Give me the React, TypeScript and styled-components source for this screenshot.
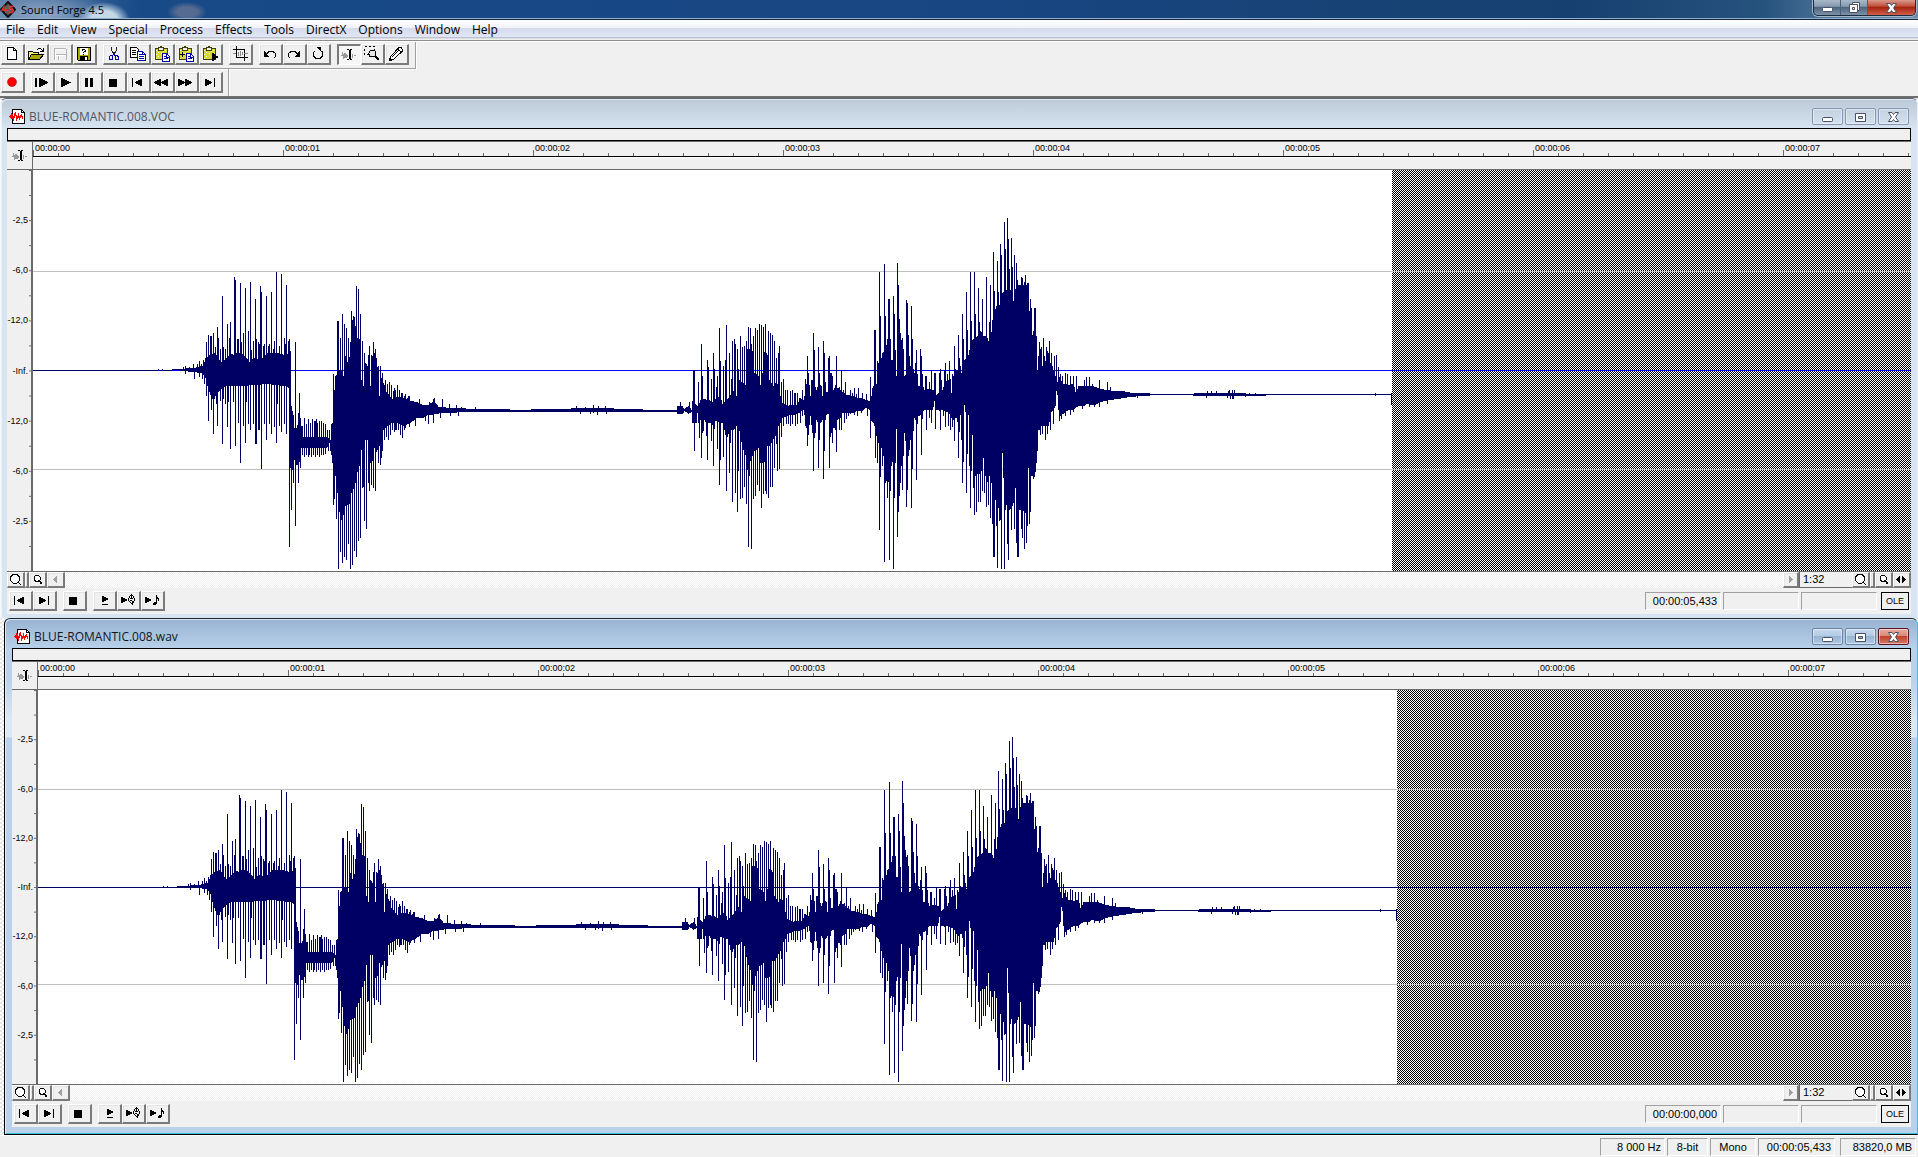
import React from "react";
import styled, { createGlobalStyle, css } from "styled-components";

const UI = '"Open Sans", "Noto Sans", sans-serif';
const SMALL = '"Liberation Sans", Arial, sans-serif';
const FACE = "#f0f0f0";

const GlobalStyle = createGlobalStyle`
  * { box-sizing: border-box; }
  body { margin: 0; background: ${FACE}; }
  button { font: inherit; color: inherit; padding: 0; margin: 0; }
`;

/* ---------- waveform data: three units per screen pixel ---------- */

type Cluster = { at: number; body: string; up: string; down: string };

const CLUSTERS: Cluster[] = [
  {
    at: 0,
    body: "0,480,482 300,480,482 372,480,482 378,480,482 414,480,482 441,479,483",
    up: "375,477 387,477 429,477",
    down: "",
  },
  {
    at: 147,
    body: "0,478,483 25,476,486 45,474,488 66,468,492 74,458,500 78,452,520 84,435,540 95,435,570 105,430,560 120,458,540 135,450,530 150,432,530 160,436,530 166,430,530 180,430,528 200,445,530 205,458,525 220,445,525 230,450,525 245,445,525 260,430,523 275,432,525 290,430,525 300,432,530 320,440,530 327,400,540 331,425,775 334,590,780 340,630,780 344,655,750 350,655,765 356,610,765 362,645,716 370,682,715 400,682,715 440,682,715 450,690,695 457,640,740 460,640,780 467,500,800 475,480,900 485,485,930 490,500,915 495,440,890 504,465,885 510,420,880 515,330,850 525,350,820 530,385,790 540,390,760 545,510,720 550,530,700 556,460,690 563,470,690 570,530,760 578,440,755 584,430,715 590,445,720 594,560,720 600,560,700 605,505,740 610,520,660 620,548,650 635,570,640 650,562,640 670,565,650 690,575,640 710,577,625 730,587,625 745,585,615 760,575,615 775,592,612 800,594,609 830,594,609 860,597,608 890,597,608 930,599,606 989,600,606",
    up: "10,471 16,468 28,471 40,462 52,462 58,453 64,462 70,450 76,444 79,396 85,375 92,378 95,378 100,369 106,411 112,351 115,384 121,417 127,258 130,411 136,417 142,342 149,384 151,336 163,201 166,210 172,387 175,387 181,219 184,396 190,369 196,234 205,363 211,216 214,420 220,393 226,267 229,387 235,396 238,402 241,228 244,246 250,408 253,402 259,258 265,408 268,402 274,246 280,417 283,393 289,186 298,408 304,192 313,384 316,402 319,225 325,393 328,387 346,396 340,615 355,609 358,549 361,624 367,648 373,624 379,642 385,627 391,639 397,627 403,633 406,633 409,627 412,639 418,633 424,633 430,639 436,642 442,660 448,660 454,642 460,492 463,540 469,501 472,333 475,333 481,384 487,312 493,342 499,354 505,384 511,396 514,303 517,333 520,318 523,321 526,351 529,228 532,387 535,237 541,312 547,393 553,429 559,462 565,435 568,408 574,435 577,444 580,396 583,453 586,417 589,444 595,468 601,468 607,489 613,530 616,510 622,522 628,516 634,525 640,543 643,534 646,540 652,525 658,540 664,549 667,549 673,558 676,552 682,564 685,558 688,558 718,567 748,576 760,567 763,564 787,567 808,582 829,585 844,591 886,591",
    down: "16,492 43,507 58,501 67,507 73,522 79,558 85,633 94,600 100,672 103,567 109,582 112,648 121,573 127,702 130,567 136,582 142,651 145,576 151,717 160,576 166,708 175,639 181,759 190,648 196,699 199,576 205,642 211,660 220,642 226,702 229,702 235,660 238,660 244,777 253,642 259,690 268,642 274,672 283,651 289,699 292,582 298,648 304,666 313,642 319,672 328,1011 334,900 340,819 346,948 349,765 355,819 361,774 367,735 373,741 379,735 385,741 388,735 394,741 400,735 406,741 412,735 418,741 424,735 430,735 436,732 445,723 451,723 454,735 457,759 460,885 463,867 469,927 475,1077 481,1026 487,1059 493,1041 499,1050 505,1002 511,1077 517,1065 523,1023 529,1041 535,993 541,984 547,834 550,831 553,933 559,957 565,819 568,843 574,825 580,834 586,843 589,726 595,759 601,765 604,744 607,693 613,690 619,681 625,690 631,675 637,660 643,666 646,660 649,660 655,660 661,675 667,684 673,660 676,654 688,651 706,648 736,633 745,642 760,639 781,624 811,618 835,618",
  },
  {
    at: 477,
    body: "0,600,606 60,600,606 100,599,606 180,597,607 250,594,609 290,595,608 330,599,606 400,600,606 449,600,606",
    up: "200,588 226,591 250,585 265,588 286,588 310,594",
    down: "210,612 240,612 262,615 290,612",
  },
  {
    at: 627,
    body: "0,600,606 48,600,606 52,588,614 66,590,614 72,598,605 85,588,612 95,600,606 98,575,640 108,585,640 112,590,610 122,572,630 128,568,670 134,568,630 140,570,680 146,572,640 155,575,640 160,580,670 166,568,635 178,560,640 188,582,640 198,572,690 208,560,660 220,545,660 230,558,650 236,510,660 246,520,715 256,525,735 262,417,780 275,417,740 284,490,725 295,500,715 300,525,760 306,490,760 312,427,758 322,435,710 328,510,708 338,530,690 345,520,680 354,525,650 360,558,640 366,580,625 385,588,618 400,585,616 412,585,612 418,565,610 430,570,600 436,535,650 444,490,675 450,560,620 456,512,670 464,530,680 470,540,630 478,490,690 482,525,640 488,560,630 492,540,650 498,548,615 504,548,612 509,490,680 516,500,665 520,540,655 527,540,660 532,535,630 540,540,625 546,548,610 560,555,610 572,558,612 590,565,605 605,565,605 615,570,595 628,575,600 633,560,633 640,530,640 648,522,680 655,460,700 662,450,715 668,430,725 675,410,820 682,400,810 690,390,840 695,452,770 700,450,700 705,420,760 709,500,658 714,300,900 720,370,820 724,390,770 730,420,740 734,500,670 740,480,820 745,440,740 750,470,690 757,470,690 762,490,625 770,485,640 776,530,620 784,520,615 792,540,600 805,538,600 818,540,600 822,550,575 830,556,600 838,545,605 846,540,600 855,515,605 865,510,610 873,550,625 880,500,630 888,480,625 896,480,660 903,490,585 909,460,700 914,450,585 920,440,716 925,435,615 930,400,760 938,390,675 945,385,800 955,375,790 960,365,800 970,378,745 978,378,830 985,395,800 992,375,800 998,330,930 1003,300,870 1010,290,870 1020,285,930 1027,250,730 1032,245,915 1038,240,885 1048,240,900 1055,240,890 1060,275,880 1066,237,835 1071,225,990 1078,225,900 1085,225,900 1095,225,910 1102,230,950 1105,235,775 1109,305,930 1114,300,800 1118,375,800 1124,320,795 1128,380,760 1131,480,660 1137,400,660 1145,478,650 1150,430,650 1156,455,650 1165,430,650 1172,460,610 1180,480,600 1186,500,590 1190,520,545 1195,500,600 1200,505,600",
    up: "61,576 88,576 100,480 103,480 115,516 124,402 127,498 142,450 145,471 154,507 160,429 163,477 169,531 172,498 178,354 181,453 190,468 196,450 199,345 208,429 214,507 217,393 223,387 226,402 232,417 235,477 241,378 247,411 253,408 259,393 265,351 271,354 274,402 280,378 286,354 292,360 298,342 304,345 310,351 316,342 325,363 331,369 337,375 343,393 349,444 355,429 358,408 364,516 370,507 376,540 382,540 391,543 397,540 403,549 406,549 412,549 427,540 436,507 442,438 445,492 454,510 460,369 463,420 475,411 478,492 490,393 493,429 496,516 505,444 508,438 514,489 523,534 526,525 529,438 535,540 538,531 544,480 550,540 556,516 571,540 577,549 583,534 589,552 595,534 607,549 619,552 631,501 637,534 643,360 646,360 652,453 658,186 661,318 667,429 670,426 673,162 676,318 682,387 685,267 688,267 691,387 700,258 703,312 706,420 712,159 715,225 718,327 721,375 727,384 730,417 739,270 742,279 745,375 748,438 754,288 757,387 766,459 769,420 781,417 784,438 787,492 796,498 799,498 808,516 814,480 823,489 826,489 838,489 841,477 844,510 853,483 856,459 862,492 868,453 871,507 877,492 883,408 886,477 895,375 898,444 901,468 907,312 910,387 919,246 922,360 931,186 934,333 943,186 946,312 955,234 958,336 967,267 979,201 988,336 991,225 1000,126 1003,243 1012,153 1015,246 1021,102 1024,135 1033,36 1036,117 1042,24 1045,87 1048,177 1054,84 1057,171 1063,135 1069,159 1072,210 1084,201 1087,204 1093,216 1096,195 1102,219 1105,219 1111,267 1114,294 1123,294 1126,294 1129,393 1138,396 1141,417 1144,411 1150,384 1153,438 1159,411 1162,423 1165,429 1168,393 1174,429 1183,438 1189,435 1195,471",
    down: "103,723 115,639 118,684 124,744 142,750 154,693 160,768 172,717 178,825 181,750 190,741 199,843 208,789 211,699 217,876 226,849 232,906 235,783 241,867 247,864 253,831 259,882 265,1011 268,798 274,1017 280,867 286,858 292,825 298,843 304,894 310,852 316,843 319,852 325,864 331,831 337,831 343,774 349,702 352,783 358,777 364,681 370,648 379,642 385,642 391,648 397,642 406,648 412,642 421,639 427,618 442,708 460,783 463,684 475,774 478,690 490,807 493,723 508,774 511,681 517,699 529,726 538,660 544,660 553,639 559,627 565,618 583,615 592,618 604,609 622,618 631,684 646,744 652,759 658,960 661,801 667,768 673,1056 676,819 682,864 688,1050 691,843 700,1077 703,864 712,981 715,906 718,819 727,840 739,891 742,840 754,894 757,777 769,810 772,642 784,735 787,627 799,660 808,624 814,639 826,657 841,660 850,618 856,651 865,648 871,660 877,651 883,693 895,744 898,666 904,690 907,819 910,756 919,849 922,732 928,768 931,894 934,783 940,834 943,915 949,906 955,876 961,876 967,843 973,849 979,891 985,885 991,924 997,942 1000,1041 1003,1041 1009,948 1012,1074 1018,933 1024,1077 1033,1077 1042,1002 1045,1050 1054,960 1063,957 1069,999 1072,1041 1075,1041 1084,957 1087,984 1093,1017 1099,999 1108,942 1111,906 1120,807 1123,801 1126,783 1132,723 1141,675 1147,672 1156,690 1162,672 1171,660 1180,642 1198,633",
  },
  {
    at: 827,
    body: "600,510,618 610,522,612 625,526,600 640,524,600 646,548,595 655,530,590 670,528,590 680,530,582 690,528,587 705,532,587 715,536,580 735,541,574 760,544,570 790,545,566 810,549,562 840,551,560 870,552,558 969,552,558",
    up: "601,492 607,498 616,489 622,492 631,498 640,498 649,498 673,510 679,501 688,501 697,522 718,510 742,516 751,531",
    down: "598,633 604,627 610,612 616,618 631,615 640,606 667,597 688,591 703,591 718,591 742,582 832,564",
  },
  {
    at: 1117,
    body: "0,552,557 130,552,558 145,549,558 284,549,558 290,552,558 345,552,558 350,552,554 727,552,554",
    up: "172,543 184,543 199,543 235,543 238,540 247,540 253,540 298,549 316,549 675,549 724,549",
    down: "169,564 232,564 241,567 247,567 250,567 286,561 675,558 724,585",
  },
];

const WAVE_W = 1359;
const WAVE_H = 401;

const nums = (s: string) => (s ? s.split(" ").map((p) => p.split(",").map(Number)) : []);

function buildWave(): string {
  const top = new Map<number, number>();
  const bottom = new Map<number, number>();
  CLUSTERS.forEach(({ at, body, up, down }) => {
    const pts = nums(body);
    for (let i = 0; i < pts.length - 1; i++) {
      const [x0, t0, b0] = pts[i];
      const [x1, t1, b1] = pts[i + 1];
      for (let x = Math.floor(x0 / 3); x <= Math.floor(x1 / 3); x++) {
        const k = Math.min(1, Math.max(0, (x * 3 - x0) / (x1 - x0)));
        top.set(at + x, Math.floor((t0 + (t1 - t0) * k) / 3));
        bottom.set(at + x, Math.floor((b0 + (b1 - b0) * k) / 3));
      }
    }
    nums(up).forEach(([x, y]) => {
      const c = at + Math.floor(x / 3);
      top.set(c, Math.min(top.get(c) ?? 999, Math.floor(y / 3)));
    });
    nums(down).forEach(([x, y]) => {
      const c = at + Math.floor(x / 3);
      bottom.set(c, Math.max(bottom.get(c) ?? 0, Math.floor(y / 3)));
    });
  });
  let d = "";
  top.forEach((t, x) => {
    if (x >= WAVE_W) return;
    const b = bottom.get(x) ?? t;
    d += `M${x} ${t + 40}h1V${Math.max(b, t + 1) + 40}h-1z`;
  });
  return d;
}

const WAVE_PATH = buildWave();

/* ---------- shell ---------- */

const Shell = styled.div`
  display: flex;
  flex-direction: column;
  min-height: 100vh;
  background: ${FACE};
  font-family: ${UI};
  font-size: 12px;
  color: #000;
  overflow: hidden;
`;

const AppTitle = styled.header`
  display: flex;
  justify-content: space-between;
  height: 20px;
  border-bottom: 1px solid #16243c;
  box-shadow: inset 0 -1px #8fb0d0;
  background:
    radial-gradient(ellipse 26px 18px at 104px 20px, #c4d8e8 0 50%, transparent 100%),
    radial-gradient(ellipse 70px 24px at 44px 14px, #90a9c6 0, transparent 100%),
    radial-gradient(ellipse 20px 10px at 187px 12px, #566b92 0 50%, transparent 100%),
    linear-gradient(90deg, #5a7ca6 0, #184a88 140px, #184682 50%, #16406f 82%, #26527e 92%, #54799c 96%, #6d8ba8 100%);
`;

const AppName = styled.h1`
  display: flex;
  align-items: center;
  gap: 5px;
  margin: 0;
  height: 18px;
  font-size: 11px;
  font-weight: 400;
`;

const AppCaption = styled.div`
  display: flex;
  height: 16px;
  margin-right: 2px;
  border: 1px solid #1b2c40;
  border-top: 0;
  border-radius: 0 0 5px 5px;
  overflow: hidden;
  box-shadow: 0 0 0 1px #a4b6c8;
`;

const AppCaptionButton = styled.button<{ $close?: boolean }>`
  display: grid;
  place-items: center;
  width: ${(p) => (p.$close ? 47 : 27)}px;
  border: 0;
  border-right: 1px solid #4b5f77;
  background: ${(p) =>
    p.$close
      ? "linear-gradient(#d99a8c 0, #c2513c 40%, #a82410 50%, #d0604a 100%)"
      : "linear-gradient(#a9b9c9 0, #8599ae 42%, #4d6680 50%, #7b93aa 100%)"};
  &:last-child { border-right: 0; }
`;

const MenuBar = styled.nav`
  display: flex;
  height: 21px;
  background: linear-gradient(#fff 0, #f0f3fa 38%, #d5dbed 42%, #e1e6f6 84%, #b6bccc 88%, #f0f0f0 95%);
  border-bottom: 1px solid #8c8c8c;
`;

const MenuItem = styled.button`
  border: 0;
  background: transparent;
  padding: 0 6px;
  line-height: 20px;
`;

const Toolbars = styled.div`
  display: flex;
  flex-direction: column;
  align-items: flex-start;
  border-top: 1px solid #fff;
  border-bottom: 2px solid #6e6e6e;
`;

const Toolbar = styled.div`
  display: flex;
  gap: 6px;
  padding: 2px 6px 3px 1px;
  border-right: 1px solid #a0a0a0;
  border-bottom: 1px solid #a0a0a0;
  box-shadow: 1px 1px #fff;
  & + & {
    padding: 3px 5px 3px 1px;
    border-bottom: 0;
    box-shadow: 1px 0 #fff;
  }
`;

const Group = styled.div`
  display: flex;
`;

const raised = css`
  border-style: solid;
  border-width: 1px 2px 2px 1px;
  border-color: #fff #7a7a7a #7a7a7a #fff;
  box-shadow: inset 1px 1px #e3e3e3;
  background: ${FACE};
`;

const ToolButton = styled.button<{ $pressed?: boolean; $short?: boolean }>`
  ${raised}
  display: grid;
  place-items: start;
  align-content: start;
  justify-content: start;
  padding: ${(p) => (p.$short ? 0 : 1)}px 0 0 2px;
  width: 24px;
  height: ${(p) => (p.$short ? 20 : 21)}px;
  ${(p) =>
    p.$pressed &&
    css`
      border-width: 2px 1px 1px 2px;
      border-color: #7a7a7a #fff #fff #7a7a7a;
      background: #f6f6f6;
      box-shadow: none;
    `}
  svg { display: block; }
`;

/* ---------- document windows ---------- */

const Workspace = styled.main`
  display: flex;
  flex: 1;
  flex-direction: column;
  background: repeating-conic-gradient(#fff 0 25%, #e4e6ea 0 50%) 0 0 / 4px 4px;
`;

const Doc = styled.section<{ $active?: boolean }>`
  display: flex;
  flex: 1 0 auto;
  flex-direction: column;
  margin-left: ${(p) => (p.$active ? 4 : 0)}px;
  padding: ${(p) => (p.$active ? "0 6px 7px 7px" : "0 6px 4px")};
  border: 1px solid ${(p) => (p.$active ? "#1c2733" : "#5e6873")};
  border-left-color: ${(p) => (p.$active ? "#000" : "#f4f8fc")};
  border-right-color: ${(p) => (p.$active ? "#36c3dc" : "#e8eef6")};
  border-bottom: ${(p) => (p.$active ? "1px solid #000" : "0")};
  border-radius: 6px 6px 0 0;
  background: ${(p) =>
    p.$active
      ? "linear-gradient(#98b4d2 0, #b9d1ea 30px, #b9d1ea 60px, #dbe8f5 100px, #dbe8f5 118px, #b9d1ea 119px)"
      : "linear-gradient(#bccad8 0, #d7e4f2 30px)"};
  box-shadow: inset 1px 1px rgba(255, 255, 255, 0.6)${(p) => (p.$active ? ", inset 0 -1px #36c3dc" : "")};
`;

const DocTitle = styled.header`
  display: flex;
  align-items: center;
  height: 29px;
  gap: 4px;
  padding: 7px 2px 1px;
`;

const DocName = styled.h2<{ $active?: boolean }>`
  flex: 1;
  margin: 0;
  font-size: 12px;
  line-height: 17px;
  font-weight: 400;
  color: ${(p) => (p.$active ? "#10161e" : "#50565e")};
`;

const DocButtons = styled.div`
  display: flex;
  gap: 2px;
`;

const DocButton = styled.button<{ $active?: boolean; $close?: boolean }>`
  display: grid;
  place-items: center;
  width: 31px;
  height: 17px;
  border: 1px solid ${(p) => (p.$active ? (p.$close ? "#5c1420" : "#6b83a3") : "#8495b2")};
  border-radius: 2px;
  box-shadow: inset 0 0 0 1px rgba(255, 255, 255, 0.45);
  background: ${(p) =>
    p.$active
      ? p.$close
        ? "linear-gradient(#e5aba0 0, #d98a7a 45%, #bf4429 50%, #d27b68 100%)"
        : "linear-gradient(#c5d8ec 0, #b3cbe4 45%, #98b5d5 50%, #b0cae4 100%)"
      : "transparent"};
`;

const DocBody = styled.div`
  display: flex;
  flex: 1;
  flex-direction: column;
  background: ${FACE};
`;

const Overview = styled.div`
  height: 13px;
  border: 1px solid #000;
`;

const RulerRow = styled.div`
  display: flex;
  height: 29px;
  border-top: 1px solid #6a6a6a;
  border-bottom: 1px solid #6a6a6a;
`;

const RulerTool = styled.button`
  display: grid;
  place-items: center;
  width: 26px;
  padding: 1px 0 0 1px;
  border: 0;
  border-right: 1px solid #6a6a6a;
  background: transparent;
`;

const Ruler = styled.div`
  display: flex;
  flex: 1;
  height: 15px;
  overflow: hidden;
  border-bottom: 1px solid #000;
  background: repeating-linear-gradient(90deg, #6a6a6a 0 1px, transparent 1px 25px) 0 100% / 100% 3px no-repeat;
  box-shadow: 0 1px #fff;
`;

const Second = styled.span`
  flex: 0 0 250px;
  padding-left: 2px;
  font: 9px/13px ${SMALL};
  background: linear-gradient(#6a6a6a, #6a6a6a) 0 100% / 1px 6px no-repeat;
`;

const PlotRow = styled.div<{ $min: number }>`
  display: flex;
  flex: 1;
  min-height: ${(p) => p.$min}px;
`;

const Scale = styled.ol`
  display: grid;
  grid-template-columns: 100%;
  grid-template-rows: 1fr repeat(7, 2fr) 1fr;
  width: 26px;
  margin: 0;
  padding: 0 4px 0 0;
  list-style: none;
  border-right: 1px solid #6a6a6a;
  background: linear-gradient(#6a6a6a, #6a6a6a) 100% 0 / 1px 1px repeat-y,
    linear-gradient(#6a6a6a 0 1px, transparent 1px) 100% 0 / 3px 6.25% repeat-y;
  font: 9px/12px ${SMALL};
`;

const Level = styled.li<{ $row: number }>`
  grid-row: ${(p) => p.$row};
  align-self: center;
  justify-self: end;
`;

const Plot = styled.div`
  position: relative;
  display: flex;
  flex: 1;
  min-width: 0;
  overflow: hidden;
`;

const Signal = styled.div`
  flex: 0 0 ${WAVE_W}px;
  background: #fff;
`;

const Past = styled.div`
  flex: 1;
  background: repeating-conic-gradient(#000 0 25%, #fff 0 50%) 0 0 / 2px 2px;
`;

const Guide = styled.i<{ $at: string; $color: string }>`
  position: absolute;
  left: 0;
  right: 0;
  top: ${(p) => p.$at};
  height: 1px;
  background: ${(p) => p.$color};
`;

const Wave = styled.svg`
  position: absolute;
  inset: 0 auto 0 0;
  display: block;
  width: ${WAVE_W}px;
  height: 100%;
`;

const ScrollRow = styled.div`
  display: flex;
  height: 17px;
  border-top: 1px solid #6a6a6a;
`;

const ScrollButton = styled.button<{ $w: number }>`
  ${raised}
  display: grid;
  place-items: center;
  width: ${(p) => p.$w}px;
`;

const ScrollTrack = styled.div`
  flex: 1;
  background: repeating-conic-gradient(#fff 0 25%, #f0f0f0 0 50%) 0 0 / 2px 2px;
`;

const Ratio = styled.output`
  width: 53px;
  padding-left: 3px;
  border-left: 1px solid #6a6a6a;
  border-bottom: 1px solid #6a6a6a;
  font: 11px/15px ${SMALL};
`;

const Transport = styled.footer`
  display: flex;
  justify-content: space-between;
  padding: 3px 2px;
`;

const ToolGroups = styled.div`
  display: flex;
  gap: 6px;
`;

const Fields = styled.div`
  display: flex;
  gap: 2px;
  align-items: center;
`;

const Field = styled.output<{ $w: number; $gap?: number; $center?: boolean }>`
  width: ${(p) => p.$w}px;
  height: 18px;
  margin-left: ${(p) => p.$gap ?? 0}px;
  padding-right: ${(p) => (p.$center ? 0 : 3)}px;
  border: 1px solid #fff;
  border-top-color: #a0a0a0;
  border-left-color: #a0a0a0;
  font: 11px/16px ${SMALL};
  text-align: ${(p) => (p.$center ? "center" : "right")};
  white-space: nowrap;
`;

const OleButton = styled.button`
  width: 28px;
  height: 18px;
  margin-left: 2px;
  border: 1px solid #000;
  background: ${FACE};
  font: 9px/14px ${SMALL};
`;

const StatusBar = styled.footer`
  display: flex;
  justify-content: flex-end;
  gap: 2px;
  height: 22px;
  padding: 2px 2px 2px 0;
  border-top: 1px solid #fff;
`;

/* ---------- icons ---------- */

const Svg = ({ w = 16, h = 16, children }: { w?: number; h?: number; children: React.ReactNode }) => (
  <svg width={w} height={h} viewBox={`0 0 ${w} ${h}`} shapeRendering="crispEdges" fill="none" stroke="none" aria-hidden="true">
    {children}
  </svg>
);

const clip = (
  <>
    <path d="M1 2.500h12v11H1z" fill="#d8d838" stroke="#404000" />
    <path d="M2 4h1v1H2zM4 6h1v1H4zM2 8h1v1H2zM4 10h1v1H4zM11 4h1v1h-1zM7 7h1v1H7zM2 12h1v1H2zM9 5h1v1H9z" fill="#fff" />
    <path d="M4.500 1.500h5v3h-5z" fill="#f0f0f0" stroke="#404000" />
    <path d="M6 0h2v2H6z" fill="#404000" />
  </>
);
const sheet = (
  <>
    <path d="M8.500 7.500h4l3 3v5h-7z" fill="#fff" stroke="#0000a8" />
    <path d="M10 10h2v1h-2zM10 12h4v1h-4zM12 8h1v3h2v1h-3z" fill="#0000a8" />
  </>
);

const icons: Record<string, React.ReactNode> = {
  new: <Svg><path d="M3.500 1.500h6l3 3v9h-9z" fill="#fff" stroke="#000" /><path d="M9.500 1.500v3h3" stroke="#000" /></Svg>,
  open: (
    <Svg>
      <path d="M.5 13.500V5.500h4l1 1h5v3" fill="#f4f460" stroke="#000" />
      <path d="M.5 13.500l3-5h12l-4 5z" fill="#a8a800" stroke="#000" />
      <path d="M9 3h1V2h3v1h1v1h1V2h1v4h-4V5h2V4h-1V3h-3v1H9z" fill="#000" />
    </Svg>
  ),
  save: <Svg><path d="M2.500 14V2.500H14M2.500 8.500H14M6.500 9v5M14.500 3v11" stroke="#b4b4b4" /><path d="M3.500 14V3.500H14M3.500 9.500H14M7.500 10v4" stroke="#fff" /></Svg>,
  saveAs: (
    <Svg>
      <path d="M1.500 1.500h13v13H3l-1.500-1z" fill="#a8a800" stroke="#000" />
      <path d="M4 2h8v7H4z" fill="#fff" /><path d="M4 10h8v4H4z" fill="#000" /><path d="M9 11h2v3H9z" fill="#fff" />
      <path d="M6 3h3v1H6zM9 4h1v2H9zM8 5h1v1H8zM7 6h1v1H7zM7 8h1v1H7zM6 4h1v1H6z" fill="#000" />
    </Svg>
  ),
  cut: (
    <Svg>
      <path d="M5.500 1v3l3 5M10.500 1v3l-3 5" stroke="#222" />
      <path d="M6.500 9.500h-2l-1 1v3h3v-4l1-1.500 1.500 1.500v4h3v-3l-1-1h-2" stroke="#0000b0" />
    </Svg>
  ),
  copy: (
    <Svg>
      <path d="M0.500 1.500h6l2 2v8h-8z" fill="#fff" stroke="#000" />
      <path d="M2 4.500h4M2 6.500h4M2 8.500h4" stroke="#000" />
      <path d="M7.500 5.500h5l3 3v6h-8z" fill="#fff" stroke="#0000b0" />
      <path d="M9 8.500h3M9 10.500h5M9 12.500h5M12.500 5v3.500H15" stroke="#0000b0" />
    </Svg>
  ),
  paste: <Svg>{clip}{sheet}</Svg>,
  pasteMix: <Svg>{clip}{sheet}<path d="M2 8.500h5M4.500 6v5" stroke="#000" /></Svg>,
  pastePlay: <Svg>{clip}<path d="M10 7h2v1h1v1h1v1h2v2h-2v1h-1v1h-1v1h-2z" fill="#000" /></Svg>,
  trim: <Svg><path d="M4.500 0v12M1 3.500h12M12.500 3v12M4 11.500h12" stroke="#000" /><path d="M1 7.500h3M6.500 6v4M8.500 5v5M10.500 6v3M12 7.500h4" stroke="#888" /></Svg>,
  undo: <Svg><path d="M4 8.500L7 5.500h4l2.500 2v3l-2 2" stroke="#000" /><path d="M2 5v6h5v-1H6V9H5V8H4V6H3V5z" fill="#000" /></Svg>,
  redo: <Svg><path d="M12 8.500L9 5.500H5l-2.500 2v3l2 2" stroke="#000" /><path d="M14 5v6H9v-1h1V9h1V8h1V6h1V5z" fill="#000" /></Svg>,
  repeat: <Svg><path d="M10 4.500L12.500 6v4L10 12.500H6L3.500 10V7l1-1.500" stroke="#000" /><path d="M7 1h4v4h-1V4H9V3H8V2H7z" fill="#000" /></Svg>,
  edit: (
    <Svg>
      <path d="M0 8.500h1.500v-3l1.500 6 1-5 1 4 1-3v2M11 7v4M12.500 8.500H15" stroke="#999" />
      <path d="M6 2h2v1h1V2h2v1H9.500v9H11v1H9v-1H8v1H6v-1h1.500V3H6z" fill="#000" />
    </Svg>
  ),
  magnify: (
    <Svg>
      <path d="M0.500 0.500h10v8h-10z" stroke="#000" strokeDasharray="2 2" />
      <circle cx="8.500" cy="7.500" r="3.500" fill="#e8e8e8" stroke="#000" /><path d="M11 10l4 4" stroke="#000" strokeWidth="2" />
    </Svg>
  ),
  pencil: <Svg><path d="M1.500 14.500l1-4 8.500-9h2l1.500 2v1.500l-9 8.500z" fill="#fff" stroke="#000" /><path d="M10 3l3 3M4 11l7-7" stroke="#000" /><path d="M1 13h2v2H1z" fill="#000" /></Svg>,
  record: <svg width="16" height="16" viewBox="0 0 16 16" aria-hidden="true"><circle cx="8" cy="8" r="4.500" fill="#f00" stroke="#700" strokeWidth="0.500" /></svg>,
  playAll: <Svg><path d="M1 4h2v9H1zM5 4h2v1h2v1h2v1h2v1h1v1h-1v1h-2v1H9v1H7v1H5z" fill="#000" /></Svg>,
  play: <Svg><path d="M3 4h2v1h2v1h2v1h2v1h2v1h-2v1H9v1H7v1H5v1H3z" fill="#000" /></Svg>,
  pause: <Svg><path d="M3 4h3v9H3zM8 4h3v9H8z" fill="#000" /></Svg>,
  stop: <Svg><path d="M3 5h8v8H3z" fill="#000" /></Svg>,
  first: <Svg><path d="M2 4h1v9H2zM12 5v7h-2v-1H8v-1H6V9H5V8h1V7h2V6h2V5z" fill="#000" /></Svg>,
  rewind: <Svg><path d="M7 5v7H5v-1H3v-1H1V9H0V8h1V7h2V6h2V5zM14 5v7h-2v-1h-2v-1H8V9H7V8h1V7h2V6h2V5z" fill="#000" /></Svg>,
  forward: <Svg><path d="M0 5v7h2v-1h2v-1h2V9h1V8H6V7H4V6H2V5zM7 5v7h2v-1h2v-1h2V9h1V8h-1V7h-2V6H9V5z" fill="#000" /></Svg>,
  last: <Svg><path d="M3 5v7h2v-1h2v-1h2V9h1V8H9V7H7V6H5V5zM12 4h1v9h-1z" fill="#000" /></Svg>,
  docPlay: <Svg><path d="M6 4h2v1h2v1h2v2h-2v1H8v1H6zM6 12h6v1H6z" fill="#000" /></Svg>,
  docLoop: (
    <Svg>
      <path d="M1 5h2v1h2v1h2v2H5v1H3v1H1z" fill="#000" />
      <path d="M10 3h3v1h-3zM9 4h1v2H9zM8 6h1v3H8zM9 9h1v1H9zM10 10h1v1h-1zM13 4h1v2h-1zM14 6h1v3h-1zM13 9h1v2h-1zM11 11h2v1h-2zM11 2h1v4h-1zM12 9h1v4h-1zM12 8h-2v1h2zM13 6h-3v1h3z" fill="#000" />
    </Svg>
  ),
  docNote: <Svg><path d="M1 5h2v1h2v1h2v2H5v1H3v1H1z" fill="#000" /><path d="M12 3h1v2h1v1h1v3h-1V7h-1v5h-1v1H9v-2h1v-1h2z" fill="#000" /></Svg>,
  lensBig: <Svg w={13} h={13}><path d="M4 1.500h4l2.500 2.500v3.500L8 10H4L1.500 7.500V4z" fill="#fff" stroke="#000" /><path d="M9 9.500l3 2" stroke="#000" /></Svg>,
  lensSmall: <Svg w={13} h={13}><path d="M4.500 2.500h3l1.500 1.500v3L7.500 8h-3L3 7V4z" fill="#fff" stroke="#000" /><path d="M8 8h2v1h1v2H9V9H8z" fill="#000" /></Svg>,
  left: <Svg w={9} h={9}><path d="M6 1v7H5V7H4V6H3V5H2V4h1V3h1V2h1V1z" fill="#a0a0a0" /></Svg>,
  right: <Svg w={9} h={9}><path d="M3 1v7h1V7h1V6h1V5h1V4H6V3H5V2H4V1z" fill="#a0a0a0" /></Svg>,
  both: <Svg w={13} h={9}><path d="M5 1v7H4V7H3V6H2V5H1V4h1V3h1V2h1V1zM7 1v7h1V7h1V6h1V5h1V4h-1V3H9V2H8V1z" fill="#000" /></Svg>,
};

const AppIcon = () => (
  <svg width="16" height="17" viewBox="0 0 16 17" aria-hidden="true">
    <path d="M8 1l7 7.500-7 7.500-7-7.500z" fill="#57606a" stroke="#111" strokeWidth="2" strokeLinejoin="round" />
    <path d="M4.500 4.500L2 9h5M5.500 6v5.500M13.500 5.500H9.500V8h2.500l1.500 1.500-1.500 2H9M8 11.500h.5" stroke="#ff2a2a" strokeWidth="1.300" fill="none" />
  </svg>
);

const DocIcon = () => (
  <Svg w={16} h={17}>
    <path d="M3.500 1.500h9l3 3v11h-12z" fill="#fff" stroke="#000" />
    <path d="M12.500 1.500v3h3" stroke="#000" />
    <path d="M0 8h1V7h1V5h1v6H2v-1H1V9H0zM3 6h1v5H3zM4 8h1v5H4zM5 5h1v5H5zM6 4h1v4H6zM7 7h1v6H7zM8 8h1v3H8zM9 5h1v5H9zM10 8h1v4h-1zM11 7h1v3h-1zM12 6h1v3h-1zM13 8h1v3h-1z" fill="#f00" />
  </Svg>
);

const CapIcon = ({ kind, big }: { kind: "min" | "max" | "restore" | "close"; big?: boolean }) => (
  <svg width="13" height="12" viewBox="0 0 13 12" aria-hidden="true" fill="#fff" stroke="#4a5166">
    {kind === "min" && <rect x="1.500" y={big ? 5.5 : 6.5} width="10" height="4" rx="1" />}
    {kind === "max" && <path d="M1.500 2.500h10v8h-10zM4.500 5.500v2h4v-2z" fillRule="evenodd" />}
    {kind === "restore" && <><path d="M4.500 .5h7v8h-7z" /><path d="M1.500 2.500h8v8h-8zM4.500 5.500v2h2v-2z" fillRule="evenodd" /></>}
    {kind === "close" && <path d="M1.500 1.500h3.500l1.500 2 1.500-2h3.500l-3 4.500 3 4.500H8l-1.500-2-1.500 2H1.500l3-4.500z" />}
  </svg>
);

/* ---------- content ---------- */

const MENUS = ["File", "Edit", "View", "Special", "Process", "Effects", "Tools", "DirectX", "Options", "Window", "Help"];

const MAIN_TOOLS = [
  ["new", "open", "save", "saveAs"],
  ["cut", "copy", "paste", "pasteMix", "pastePlay"],
  ["trim"],
  ["undo", "redo", "repeat"],
  ["edit", "magnify", "pencil"],
];
const PLAY_TOOLS = [["record"], ["playAll", "play", "pause", "stop", "first", "rewind", "forward", "last"]];
const DOC_TOOLS = [["first", "last"], ["stop"], ["docPlay", "docLoop", "docNote"]];
const LEVELS = ["-2,5", "-6,0", "-12,0", "-Inf.", "-12,0", "-6,0", "-2,5"];
const SECONDS = [0, 1, 2, 3, 4, 5, 6, 7];

const Tools = ({ groups, short }: { groups: string[][]; short?: boolean }) => (
  <>
    {groups.map((g) => (
      <Group key={g.join()}>
        {g.map((n) => (
          <ToolButton key={n} type="button" aria-label={n} $pressed={n === "edit"} $short={short}>
            {icons[n]}
          </ToolButton>
        ))}
      </Group>
    ))}
  </>
);

type DocProps = { name: string; time: string; active?: boolean; center: string; plotMin: number };

const DocumentWindow = ({ name, time, active, center, plotMin }: DocProps) => (
  <Doc $active={active}>
    <DocTitle>
      <DocIcon />
      <DocName $active={active}>{name}</DocName>
      <DocButtons>
        <DocButton type="button" aria-label="Minimize" $active={active}><CapIcon kind="min" /></DocButton>
        <DocButton type="button" aria-label="Maximize" $active={active}><CapIcon kind="max" /></DocButton>
        <DocButton type="button" aria-label="Close" $active={active} $close><CapIcon kind="close" /></DocButton>
      </DocButtons>
    </DocTitle>
    <DocBody>
      <Overview />
      <RulerRow>
        <RulerTool type="button" aria-label="Edit tool">{icons.edit}</RulerTool>
        <Ruler>
          {SECONDS.map((s) => (
            <Second key={s}>{`00:00:0${s}`}</Second>
          ))}
        </Ruler>
      </RulerRow>
      <PlotRow $min={plotMin}>
        <Scale>
          {LEVELS.map((l, i) => (
            <Level key={i} $row={i + 2}>{l}</Level>
          ))}
        </Scale>
        <Plot>
          <Signal />
          <Past />
          <Guide $at="25.2%" $color="#c0c0c0" />
          <Guide $at="74.6%" $color="#c0c0c0" />
          <Guide $at="49.9%" $color={center} />
          <Wave viewBox={`0 0 ${WAVE_W} ${WAVE_H}`} preserveAspectRatio="none" shapeRendering="crispEdges" role="img" aria-label={name}>
            <path d={WAVE_PATH} fill="#000064" />
          </Wave>
        </Plot>
      </PlotRow>
      <ScrollRow>
        <ScrollButton type="button" $w={18} aria-label="Zoom in level">{icons.lensBig}</ScrollButton>
        <ScrollButton type="button" $w={4} aria-label="Level zoom" />
        <ScrollButton type="button" $w={18} aria-label="Zoom out level">{icons.lensSmall}</ScrollButton>
        <ScrollButton type="button" $w={18} aria-label="Scroll left">{icons.left}</ScrollButton>
        <ScrollTrack />
        <ScrollButton type="button" $w={16} aria-label="Scroll right">{icons.right}</ScrollButton>
        <Ratio>1:32</Ratio>
        <ScrollButton type="button" $w={18} aria-label="Zoom in">{icons.lensBig}</ScrollButton>
        <ScrollButton type="button" $w={5} aria-label="Time zoom" />
        <ScrollButton type="button" $w={18} aria-label="Zoom out">{icons.lensSmall}</ScrollButton>
        <ScrollButton type="button" $w={18} aria-label="Split">{icons.both}</ScrollButton>
      </ScrollRow>
      <Transport>
        <ToolGroups>
          <Tools groups={DOC_TOOLS} short />
        </ToolGroups>
        <Fields>
          <Field $w={76}>{time}</Field>
          <Field $w={76} />
          <Field $w={76} />
          <OleButton type="button">OLE</OleButton>
        </Fields>
      </Transport>
    </DocBody>
  </Doc>
);

export default function App() {
  return (
    <Shell>
      <GlobalStyle />
      <AppTitle>
        <AppName><AppIcon />Sound Forge 4.5</AppName>
        <AppCaption>
          <AppCaptionButton type="button" aria-label="Minimize"><CapIcon kind="min" big /></AppCaptionButton>
          <AppCaptionButton type="button" aria-label="Restore"><CapIcon kind="restore" /></AppCaptionButton>
          <AppCaptionButton type="button" aria-label="Close" $close><CapIcon kind="close" /></AppCaptionButton>
        </AppCaption>
      </AppTitle>
      <MenuBar>
        {MENUS.map((m) => (
          <MenuItem key={m} type="button">{m}</MenuItem>
        ))}
      </MenuBar>
      <Toolbars>
        <Toolbar><Tools groups={MAIN_TOOLS} /></Toolbar>
        <Toolbar><Tools groups={PLAY_TOOLS} /></Toolbar>
      </Toolbars>
      <Workspace>
        <DocumentWindow name="BLUE-ROMANTIC.008.VOC" time="00:00:05,433" center="#0000ff" plotMin={401} />
        <DocumentWindow name="BLUE-ROMANTIC.008.wav" time="00:00:00,000" center="#000064" plotMin={394} active />
      </Workspace>
      <StatusBar>
        <Field $w={65}>8 000 Hz</Field>
        <Field $w={41} $center>8-bit</Field>
        <Field $w={46} $center>Mono</Field>
        <Field $w={77}>00:00:05,433</Field>
        <Field $w={76} $gap={3}>83820,0 MB</Field>
      </StatusBar>
    </Shell>
  );
}
